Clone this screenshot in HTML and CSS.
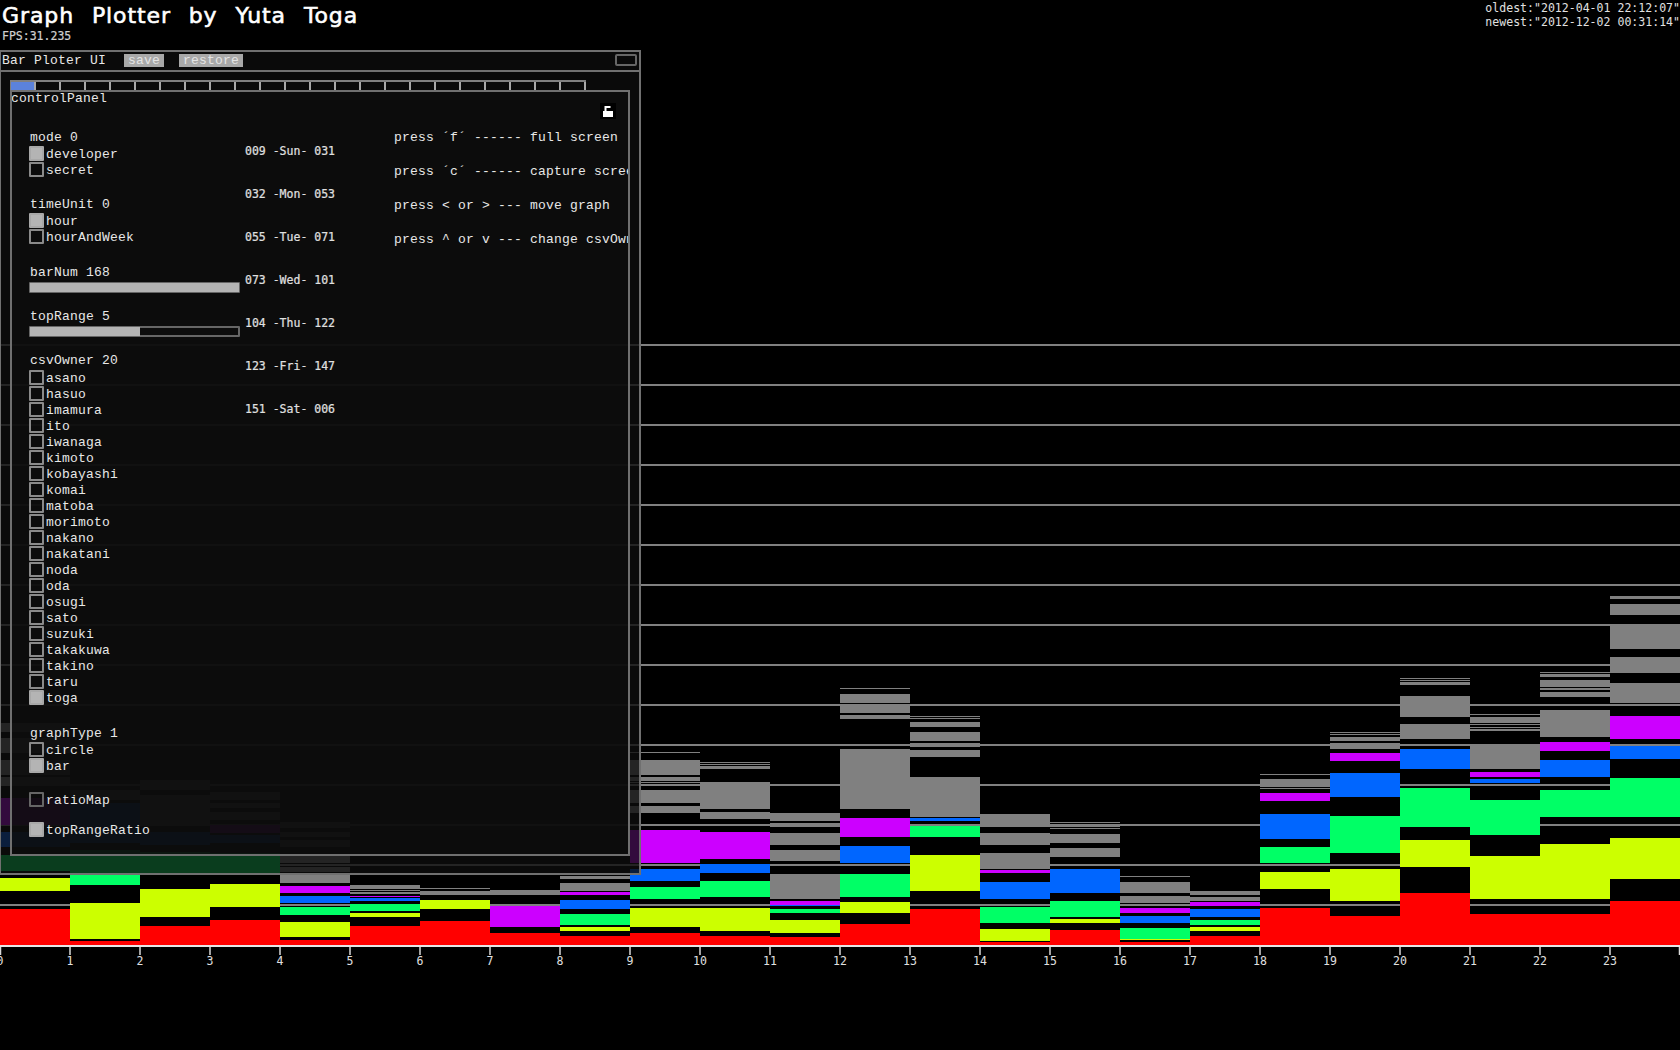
FILE: index.html
```html
<!DOCTYPE html>
<html lang="en">
<head>
  <meta charset="UTF-8" />
  <title>Graph Plotter by Yuta Toga</title>
  <link rel="stylesheet" href="styles.css">
</head>
<body>

<svg class="chart" width="1680" height="1050" viewBox="0 0 1680 1050">
  <g class="grid">
    <rect y="344"/><rect y="384"/><rect y="424"/><rect y="464"/><rect y="504"/>
    <rect y="544"/><rect y="584"/><rect y="624"/><rect y="664"/><rect y="704"/>
    <rect y="744"/><rect y="784"/><rect y="824"/><rect y="864"/><rect y="904"/>
  </g>

  <g class="bars">
    <g>
      <rect class="gr" y="723" height="9"/><rect class="gr" y="738" height="15"/><rect class="gr" y="760" height="15"/><rect class="gr" y="777" height="9"/>
      <rect class="pu" y="798" height="27"/><rect class="bl" y="832" height="15"/><rect class="gn" y="855" height="16"/><rect class="ye" y="878" height="13"/><rect class="re" y="909" height="36"/>
    </g>
    <g transform="translate(70)">
      <rect class="gr" y="790" height="10"/>
      <rect class="bl" y="803" height="40"/><rect class="gn" y="850" height="35"/><rect class="ye" y="903" height="36"/><rect class="re" y="941" height="4"/>
    </g>
    <g transform="translate(140)">
      <rect class="gr" y="780" height="10"/><rect class="gr" y="795" height="30"/>
      <rect class="bl" y="832" height="13"/><rect class="gn" y="852" height="21"/><rect class="ye" y="889" height="28"/><rect class="re" y="926" height="19"/>
    </g>
    <g transform="translate(210)">
      <rect class="gr" y="792" height="8"/><rect class="gr" y="803" height="5"/><rect class="gr" y="812" height="8"/>
      <rect class="pu" y="825" height="8"/><rect class="bl" y="835" height="8"/><rect class="gn" y="853" height="20"/><rect class="ye" y="884" height="23"/><rect class="re" y="920" height="25"/>
    </g>
    <g transform="translate(280)">
      <rect class="gr" y="822" height="6"/><rect class="gr" y="832" height="5"/><rect class="gr" y="840" height="7"/><rect class="gr" y="856" height="7"/><rect class="gr" y="867" height="5"/><rect class="gr" y="875" height="8"/>
      <rect class="pu" y="886" height="7"/><rect class="bl" y="896" height="7"/><rect class="gn" y="907" height="8"/><rect class="ye" y="922" height="15"/><rect class="re" y="940" height="5"/>
    </g>
    <g transform="translate(350)">
      <rect class="gr" y="885" height="4"/><rect class="gr" y="890" height="1"/><rect class="gr" y="892" height="2"/>
      <rect class="pu" y="896" height="1"/><rect class="bl" y="898" height="3"/><rect class="gn" y="904" height="7"/><rect class="ye" y="913" height="4"/><rect class="re" y="926" height="19"/>
    </g>
    <g transform="translate(420)">
      <rect class="gr" y="888" height="1"/><rect class="gr" y="891" height="4"/>
      <rect class="ye" y="900" height="9"/><rect class="re" y="921" height="24"/>
    </g>
    <g transform="translate(490)">
      <rect class="gr" y="890" height="5"/>
      <rect class="pu" y="906" height="21"/><rect class="re" y="933" height="12"/>
    </g>
    <g transform="translate(560)">
      <rect class="gr" y="876" height="3"/><rect class="gr" y="883" height="8"/>
      <rect class="pu" y="892" height="3"/><rect class="bl" y="900" height="9"/><rect class="gn" y="914" height="11"/><rect class="ye" y="927" height="4"/><rect class="re" y="936" height="9"/>
    </g>
    <g transform="translate(630)">
      <rect class="gr" y="752" height="1"/><rect class="gr" y="760" height="15"/><rect class="gr" y="777" height="4"/><rect class="gr" y="782" height="1"/><rect class="gr" y="784" height="2"/><rect class="gr" y="790" height="13"/><rect class="gr" y="806" height="7"/><rect class="gr" y="824" height="2"/>
      <rect class="pu" y="830" height="33"/><rect class="bl" y="869" height="12"/><rect class="gn" y="887" height="12"/><rect class="ye" y="908" height="19"/><rect class="re" y="933" height="12"/>
    </g>
    <g transform="translate(700)">
      <rect class="gr" y="762" height="1"/><rect class="gr" y="764" height="1"/><rect class="gr" y="766" height="3"/><rect class="gr" y="782" height="27"/><rect class="gr" y="812" height="7"/><rect class="gr" y="824" height="2"/>
      <rect class="pu" y="832" height="27"/><rect class="bl" y="864" height="9"/><rect class="gn" y="881" height="16"/><rect class="ye" y="908" height="23"/><rect class="re" y="936" height="9"/>
    </g>
    <g transform="translate(770)">
      <rect class="gr" y="813" height="8"/><rect class="gr" y="823" height="4"/><rect class="gr" y="833" height="12"/><rect class="gr" y="850" height="11"/><rect class="gr" y="874" height="25"/>
      <rect class="pu" y="901" height="4"/><rect class="bl" y="905" height="1"/><rect class="gn" y="909" height="4"/><rect class="ye" y="920" height="13"/><rect class="re" y="937" height="8"/>
    </g>
    <g transform="translate(840)">
      <rect class="gr" y="688" height="1"/><rect class="gr" y="694" height="9"/><rect class="gr" y="704" height="9"/><rect class="gr" y="715" height="4"/><rect class="gr" y="749" height="60"/><rect class="gr" y="864" height="1"/>
      <rect class="pu" y="818" height="19"/><rect class="bl" y="846" height="17"/><rect class="gn" y="874" height="23"/><rect class="ye" y="902" height="11"/><rect class="re" y="924" height="21"/>
    </g>
    <g transform="translate(910)">
      <rect class="gr" y="716" height="1"/><rect class="gr" y="718" height="1"/><rect class="gr" y="722" height="5"/><rect class="gr" y="732" height="9"/><rect class="gr" y="743" height="4"/><rect class="gr" y="750" height="7"/><rect class="gr" y="777" height="40"/>
      <rect class="bl" y="818" height="3"/><rect class="gn" y="826" height="11"/><rect class="ye" y="855" height="36"/><rect class="re" y="909" height="36"/>
    </g>
    <g transform="translate(980)">
      <rect class="gr" y="814" height="13"/><rect class="gr" y="833" height="12"/><rect class="gr" y="853" height="16"/>
      <rect class="pu" y="870" height="3"/><rect class="bl" y="882" height="17"/><rect class="gn" y="907" height="16"/><rect class="ye" y="929" height="12"/><rect class="re" y="942" height="3"/>
    </g>
    <g transform="translate(1050)">
      <rect class="gr" y="822" height="1"/><rect class="gr" y="824" height="3"/><rect class="gr" y="828" height="1"/><rect class="gr" y="834" height="9"/><rect class="gr" y="848" height="9"/>
      <rect class="bl" y="869" height="24"/><rect class="gn" y="901" height="16"/><rect class="ye" y="919" height="4"/><rect class="re" y="930" height="15"/>
    </g>
    <g transform="translate(1120)">
      <rect class="gr" y="876" height="1"/><rect class="gr" y="882" height="11"/><rect class="gr" y="896" height="7"/>
      <rect class="pu" y="908" height="5"/><rect class="bl" y="916" height="7"/><rect class="gn" y="928" height="11"/><rect class="ye" y="939" height="1"/><rect class="re" y="942" height="3"/>
    </g>
    <g transform="translate(1190)">
      <rect class="gr" y="891" height="4"/><rect class="gr" y="897" height="4"/>
      <rect class="pu" y="902" height="4"/><rect class="bl" y="909" height="8"/><rect class="gn" y="920" height="5"/><rect class="ye" y="927" height="4"/><rect class="re" y="936" height="9"/>
    </g>
    <g transform="translate(1260)">
      <rect class="gr" y="774" height="1"/><rect class="gr" y="779" height="8"/><rect class="gr" y="788" height="1"/>
      <rect class="pu" y="793" height="8"/><rect class="bl" y="814" height="25"/><rect class="gn" y="847" height="16"/><rect class="ye" y="872" height="17"/><rect class="re" y="908" height="37"/>
    </g>
    <g transform="translate(1330)">
      <rect class="gr" y="732" height="1"/><rect class="gr" y="734" height="1"/><rect class="gr" y="737" height="4"/><rect class="gr" y="743" height="6"/>
      <rect class="pu" y="753" height="8"/><rect class="bl" y="773" height="24"/><rect class="gn" y="816" height="37"/><rect class="ye" y="869" height="32"/><rect class="re" y="916" height="29"/>
    </g>
    <g transform="translate(1400)">
      <rect class="gr" y="678" height="1"/><rect class="gr" y="680" height="1"/><rect class="gr" y="682" height="3"/><rect class="gr" y="696" height="21"/><rect class="gr" y="724" height="15"/>
      <rect class="bl" y="749" height="20"/><rect class="gn" y="788" height="39"/><rect class="ye" y="840" height="27"/><rect class="re" y="893" height="52"/>
    </g>
    <g transform="translate(1470)">
      <rect class="gr" y="714" height="1"/><rect class="gr" y="717" height="6"/><rect class="gr" y="724" height="1"/><rect class="gr" y="727" height="1"/><rect class="gr" y="729" height="2"/><rect class="gr" y="744" height="25"/>
      <rect class="pu" y="772" height="5"/><rect class="bl" y="779" height="4"/><rect class="gn" y="800" height="35"/><rect class="ye" y="856" height="43"/><rect class="re" y="914" height="31"/>
    </g>
    <g transform="translate(1540)">
      <rect class="gr" y="672" height="1"/><rect class="gr" y="674" height="3"/><rect class="gr" y="680" height="7"/><rect class="gr" y="688" height="2"/><rect class="gr" y="692" height="5"/><rect class="gr" y="710" height="27"/>
      <rect class="pu" y="742" height="9"/><rect class="bl" y="760" height="17"/><rect class="gn" y="790" height="27"/><rect class="ye" y="844" height="55"/><rect class="re" y="914" height="31"/>
    </g>
    <g transform="translate(1610)">
      <rect class="gr" y="596" height="3"/><rect class="gr" y="604" height="11"/><rect class="gr" y="625" height="24"/><rect class="gr" y="657" height="16"/><rect class="gr" y="683" height="20"/>
      <rect class="pu" y="716" height="23"/><rect class="bl" y="746" height="13"/><rect class="gn" y="778" height="39"/><rect class="ye" y="838" height="41"/><rect class="re" y="901" height="44"/>
    </g>
  </g>

  <g class="axis">
    <rect class="axis-line" y="945" width="1680" height="2"/>
    <path d="M0.5 947v8M70 947v8M140 947v8M210 947v8M280 947v8M350 947v8M420 947v8M490 947v8M560 947v8M630 947v8M700 947v8M770 947v8M840 947v8M910 947v8M980 947v8M1050 947v8M1120 947v8M1190 947v8M1260 947v8M1330 947v8M1400 947v8M1470 947v8M1540 947v8M1610 947v8M1679.5 947v8"/>
    <text x="0" y="965">0</text><text x="70" y="965">1</text><text x="140" y="965">2</text><text x="210" y="965">3</text>
    <text x="280" y="965">4</text><text x="350" y="965">5</text><text x="420" y="965">6</text><text x="490" y="965">7</text>
    <text x="560" y="965">8</text><text x="630" y="965">9</text><text x="700" y="965">10</text><text x="770" y="965">11</text>
    <text x="840" y="965">12</text><text x="910" y="965">13</text><text x="980" y="965">14</text><text x="1050" y="965">15</text>
    <text x="1120" y="965">16</text><text x="1190" y="965">17</text><text x="1260" y="965">18</text><text x="1330" y="965">19</text>
    <text x="1400" y="965">20</text><text x="1470" y="965">21</text><text x="1540" y="965">22</text><text x="1610" y="965">23</text>
  </g>
</svg>

<header class="top">
  <div>
    <h1>Graph Plotter by Yuta Toga</h1>
    <div class="fps">FPS:31.235</div>
  </div>
  <div class="dates">
    <div>oldest:"2012-04-01 22:12:07"</div>
    <div>newest:"2012-12-02 00:31:14"</div>
  </div>
</header>

<section class="window">
  <div class="titlebar">
    <span class="window-title">Bar Ploter UI</span>
    <span class="btn save">save</span>
    <span class="btn restore">restore</span>
    <span class="minimize"></span>
  </div>

  <div class="tabs">
    <span class="tab active"></span><span class="tab"></span><span class="tab"></span><span class="tab"></span>
    <span class="tab"></span><span class="tab"></span><span class="tab"></span><span class="tab"></span>
    <span class="tab"></span><span class="tab"></span><span class="tab"></span><span class="tab"></span>
    <span class="tab"></span><span class="tab"></span><span class="tab"></span><span class="tab"></span>
    <span class="tab"></span><span class="tab"></span><span class="tab"></span><span class="tab"></span>
    <span class="tab"></span><span class="tab"></span><span class="tab"></span>
  </div>

  <div class="panel">
    <div class="panel-title">controlPanel</div>
    <svg class="lock" width="16" height="16" viewBox="0 0 16 16">
      <rect width="16" height="16" fill="#000"/>
      <rect x="4.5" y="3" width="6" height="2" fill="#fff"/>
      <rect x="4.5" y="5" width="2" height="3" fill="#fff"/>
      <rect x="3" y="8" width="10" height="6" fill="#fff"/>
    </svg>

    <div class="panel-body">
      <div class="controls">
        <div class="group">
          <div class="label">mode 0</div>
          <div class="check"><i class="box on"></i>developer</div>
          <div class="check"><i class="box"></i>secret</div>
        </div>
        <div class="group gap-18">
          <div class="label">timeUnit 0</div>
          <div class="check"><i class="box on"></i>hour</div>
          <div class="check"><i class="box"></i>hourAndWeek</div>
        </div>
        <div class="group gap-19">
          <div class="label">barNum 168</div>
          <div class="slider"><span class="fill full"></span></div>
        </div>
        <div class="group gap-15">
          <div class="label">topRange 5</div>
          <div class="slider"><span class="fill half"></span></div>
        </div>
        <div class="group gap-15">
          <div class="label label-list">csvOwner 20</div>
          <div class="check"><i class="box"></i>asano</div>
          <div class="check"><i class="box"></i>hasuo</div>
          <div class="check"><i class="box"></i>imamura</div>
          <div class="check"><i class="box"></i>ito</div>
          <div class="check"><i class="box"></i>iwanaga</div>
          <div class="check"><i class="box"></i>kimoto</div>
          <div class="check"><i class="box"></i>kobayashi</div>
          <div class="check"><i class="box"></i>komai</div>
          <div class="check"><i class="box"></i>matoba</div>
          <div class="check"><i class="box"></i>morimoto</div>
          <div class="check"><i class="box"></i>nakano</div>
          <div class="check"><i class="box"></i>nakatani</div>
          <div class="check"><i class="box"></i>noda</div>
          <div class="check"><i class="box"></i>oda</div>
          <div class="check"><i class="box"></i>osugi</div>
          <div class="check"><i class="box"></i>sato</div>
          <div class="check"><i class="box"></i>suzuki</div>
          <div class="check"><i class="box"></i>takakuwa</div>
          <div class="check"><i class="box"></i>takino</div>
          <div class="check"><i class="box"></i>taru</div>
          <div class="check"><i class="box on"></i>toga</div>
        </div>
        <div class="group gap-19">
          <div class="label">graphType 1</div>
          <div class="check"><i class="box"></i>circle</div>
          <div class="check"><i class="box on"></i>bar</div>
        </div>
        <div class="group gap-18">
          <div class="check"><i class="box dim"></i>ratioMap</div>
        </div>
        <div class="group gap-14">
          <div class="check"><i class="box on"></i>topRangeRatio</div>
        </div>
      </div>

      <div class="days">
        <div>009 -Sun- 031</div>
        <div>032 -Mon- 053</div>
        <div>055 -Tue- 071</div>
        <div>073 -Wed- 101</div>
        <div>104 -Thu- 122</div>
        <div>123 -Fri- 147</div>
        <div>151 -Sat- 006</div>
      </div>

      <div class="help">
        <div>press ´f´ ------ full screen</div>
        <div>press ´c´ ------ capture screen</div>
        <div>press &lt; or &gt; --- move graph</div>
        <div>press ^ or v --- change csvOwner</div>
      </div>
    </div>
  </div>
</section>

</body>
</html>
```

FILE: styles.css
```css
* {
  box-sizing: border-box;
}

body {
  margin: 0;
  position: relative;
  height: 1050px;
  overflow: hidden;
  background: #000;
  color: #e8e8e8;
  font-family: "Liberation Mono", monospace;
  font-size: 13px;
  letter-spacing: 0.2px;
}

/* graph */

.chart {
  position: absolute;
  top: 0;
  left: 0;
}

.grid rect {
  width: 1680px;
  height: 2px;
  fill: #808080;
}

.bars rect {
  width: 70px;
}

.gr { fill: #808080; }
.pu { fill: #cc00ff; }
.bl { fill: #0066ff; }
.gn { fill: #00ff66; }
.ye { fill: #ccff00; }
.re { fill: #ff0000; }

.axis-line {
  fill: #e6e6e6;
}

.axis path {
  stroke: #d8d8d8;
  stroke-width: 1.5;
}

.axis text {
  fill: #e0e0e0;
  font-family: "DejaVu Sans Mono", monospace;
  font-size: 11.5px;
  letter-spacing: 0;
  text-anchor: middle;
}

/* header */

.top {
  position: relative;
  display: flex;
  justify-content: space-between;
  align-items: flex-start;
}

h1 {
  margin: 0 0 0 2px;
  font-family: "DejaVu Sans", sans-serif;
  font-size: 22px;
  font-weight: normal;
  line-height: 31px;
  letter-spacing: 0.9px;
  word-spacing: 10px;
  color: #fff;
  -webkit-text-stroke: 0.6px #fff;
}

.fps {
  margin: -2px 0 0 2px;
  font-family: "DejaVu Sans Mono", monospace;
  font-size: 11.5px;
  line-height: 14px;
  letter-spacing: 0;
  color: #d0d0d0;
  -webkit-text-stroke: 0.2px #d0d0d0;
}

.dates {
  padding-top: 1px;
  font-family: "DejaVu Sans Mono", monospace;
  font-size: 11.55px;
  line-height: 14px;
  letter-spacing: 0;
  white-space: nowrap;
  color: #e0e0e0;
}

/* window */

.window {
  position: absolute;
  top: 50px;
  left: -1px;
  width: 642px;
  height: 825px;
  background: rgba(13, 13, 13, 0.8);
  border: 2px solid #707070;
}

.titlebar {
  display: flex;
  align-items: center;
  height: 20px;
  padding-left: 1px;
  padding-bottom: 2px;
  border-bottom: 2px solid #707070;
}

.btn {
  height: 13px;
  line-height: 13px;
  text-align: center;
  background: #a8a8a8;
  color: #e4e4e4;
}

.save {
  width: 40px;
  margin-left: 18px;
}

.restore {
  width: 64px;
  margin-left: 15px;
}

.minimize {
  width: 22px;
  height: 12px;
  margin-left: auto;
  margin-right: 2px;
  border: 2px solid #666;
  border-radius: 2px;
}

.tabs {
  display: flex;
  width: 576px;
  height: 10px;
  margin: 8px 0 0 9px;
  border-top: 2px solid #808080;
  border-left: 1px solid #808080;
}

.tab {
  width: 25px;
  border-right: 2px solid #a8a8a8;
}

.tab.active {
  background: #5b82dc;
}

/* control panel */

.panel {
  position: relative;
  width: 620px;
  height: 766px;
  margin-left: 9px;
  overflow: hidden;
  background: rgba(13, 13, 13, 0.8);
  border: 2px solid #707070;
}

.panel-title {
  height: 13px;
  margin-left: -1px;
  line-height: 13px;
}

.lock {
  position: absolute;
  top: 11px;
  right: 12px;
}

.panel-body {
  display: flex;
  padding: 16px 0 0 17px;
}

.controls {
  flex: none;
  width: 216px;
  padding-top: 8px;
}

.group.gap-14 {
  margin-top: 14px;
}

.group.gap-15 {
  margin-top: 15px;
}

.group.gap-18 {
  margin-top: 18px;
}

.group.gap-19 {
  margin-top: 19px;
}

.label {
  height: 17px;
  line-height: 17px;
  padding-left: 1px;
}

.label-list {
  margin-bottom: 1px;
}

.check {
  display: flex;
  align-items: center;
  gap: 2px;
  height: 16px;
}

.box {
  flex: none;
  align-self: flex-start;
  width: 15px;
  height: 15px;
  border: 2px solid #8a8a8a;
  border-radius: 1px;
}

.box.on {
  background: #b4b4b4;
  border-color: #a8a8a8;
}

.box.dim {
  border-color: #666;
}

.slider {
  width: 211px;
  height: 11px;
  margin-top: 1px;
  border: 2px solid #666;
  border-radius: 1px;
}

.fill {
  display: block;
  height: 9px;
  margin: -1px 0 0 -1px;
  background: #b4b4b4;
}

.fill.full {
  width: 209px;
}

.fill.half {
  width: 110px;
}

.days {
  flex: none;
  width: 149px;
  padding-top: 9px;
  font-family: "DejaVu Sans Mono", monospace;
  font-size: 11.5px;
  line-height: 43px;
  letter-spacing: 0;
  color: #e0e0e0;
  -webkit-text-stroke: 0.2px #e0e0e0;
}

.help {
  line-height: 34px;
  white-space: nowrap;
}
```
